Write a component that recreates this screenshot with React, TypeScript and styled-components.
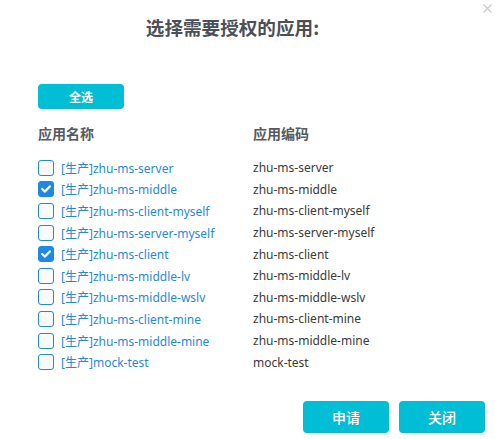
import React, { useState } from "react";
import styled, { createGlobalStyle } from "styled-components";

const Global = createGlobalStyle`
  html, body { margin: 0; padding: 0; background: #fff; }
  body { font-family: "Noto Sans", "Noto Sans CJK SC", sans-serif; }
`;

const Modal = styled.div`
  position: relative;
  width: 495px;
  height: 439px;
  box-sizing: border-box;
  padding: 0 10px 6px 38px;
  display: flex;
  flex-direction: column;
  background: #fff;
`;

const Close = styled.button`
  position: absolute;
  top: 2px;
  right: 2px;
  width: 12px;
  height: 12px;
  padding: 0;
  border: 0;
  background: none;
  display: flex;
  align-items: center;
  justify-content: center;
  cursor: pointer;
`;

const Title = styled.h1`
  margin: 15px 0 0 0;
  padding-right: 58px;
  text-align: center;
  font-family: "Noto Sans CJK SC", sans-serif;
  font-size: 18.6px;
  font-weight: 700;
  line-height: 24px;
  color: #4b4f58;
`;

const SelectAll = styled.button`
  margin-top: 45px;
  align-self: flex-start;
  width: 86px;
  height: 25px;
  border: 0;
  border-radius: 4px;
  background: #00bed6;
  color: #fff;
  font-family: "Noto Sans CJK SC", sans-serif;
  font-size: 12px;
  font-weight: 700;
  cursor: pointer;
`;

const Table = styled.div`
  margin-top: 14px;
  display: grid;
  grid-template-columns: 215px 1fr;
`;

const HeadCell = styled.div`
  font-family: "Noto Sans CJK SC", sans-serif;
  font-size: 14px;
  font-weight: 700;
  color: #555a62;
  line-height: 20px;
  padding-bottom: 14px;
`;

const NameCell = styled.label`
  display: flex;
  align-items: center;
  gap: 7px;
  height: 21.6px;
  cursor: pointer;
`;

const Box = styled.span<{ $checked: boolean }>`
  width: 16px;
  height: 16px;
  box-sizing: border-box;
  border-radius: 3px;
  border: 1px solid #1e88e5;
  background: ${(p) => (p.$checked ? "#1e88e5" : "#fafafa")};
  display: flex;
  align-items: center;
  justify-content: center;
  flex: none;
`;

const NameText = styled.span`
  font-size: 12px;
  color: #1e88e5;
  white-space: nowrap;
`;

const CodeCell = styled.div`
  display: flex;
  align-items: center;
  height: 21.6px;
  font-size: 12px;
  color: #3a3a3a;
  white-space: nowrap;
`;

const Footer = styled.div`
  margin-top: auto;
  display: flex;
  justify-content: flex-end;
  gap: 10px;
`;

const FooterButton = styled.button`
  width: 86px;
  height: 32px;
  border: 0;
  border-radius: 4px;
  background: #00bed6;
  color: #fff;
  font-family: "Noto Sans CJK SC", sans-serif;
  font-size: 14px;
  font-weight: 500;
  cursor: pointer;
`;

const apps = [
  { code: "zhu-ms-server", checked: false },
  { code: "zhu-ms-middle", checked: true },
  { code: "zhu-ms-client-myself", checked: false },
  { code: "zhu-ms-server-myself", checked: false },
  { code: "zhu-ms-client", checked: true },
  { code: "zhu-ms-middle-lv", checked: false },
  { code: "zhu-ms-middle-wslv", checked: false },
  { code: "zhu-ms-client-mine", checked: false },
  { code: "zhu-ms-middle-mine", checked: false },
  { code: "mock-test", checked: false },
];

export default function App() {
  const [checked, setChecked] = useState(apps.map((a) => a.checked));
  return (
    <>
      <Global />
      <Modal>
        <Close aria-label="close">
          <svg width="9" height="9" viewBox="0 0 9 9">
            <path d="M0.5 0.5L8.5 8.5M8.5 0.5L0.5 8.5" stroke="#c8c8c8" strokeWidth="1.2" />
          </svg>
        </Close>
        <Title>选择需要授权的应用:</Title>
        <SelectAll onClick={() => setChecked(apps.map(() => true))}>全选</SelectAll>
        <Table>
          <HeadCell>应用名称</HeadCell>
          <HeadCell>应用编码</HeadCell>
          {apps.map((a, i) => (
            <React.Fragment key={a.code}>
              <NameCell
                onClick={() =>
                  setChecked((c) => c.map((v, j) => (j === i ? !v : v)))
                }
              >
                <Box $checked={checked[i]}>
                  {checked[i] && (
                    <svg width="10" height="8" viewBox="0 0 10 8">
                      <path d="M1.2 4L4 6.6L8.8 1.4" fill="none" stroke="#fff" strokeWidth="2.2" strokeLinecap="round" strokeLinejoin="round" />
                    </svg>
                  )}
                </Box>
                <NameText>[生产]{a.code}</NameText>
              </NameCell>
              <CodeCell>{a.code}</CodeCell>
            </React.Fragment>
          ))}
        </Table>
        <Footer>
          <FooterButton>申请</FooterButton>
          <FooterButton>关闭</FooterButton>
        </Footer>
      </Modal>
    </>
  );
}
